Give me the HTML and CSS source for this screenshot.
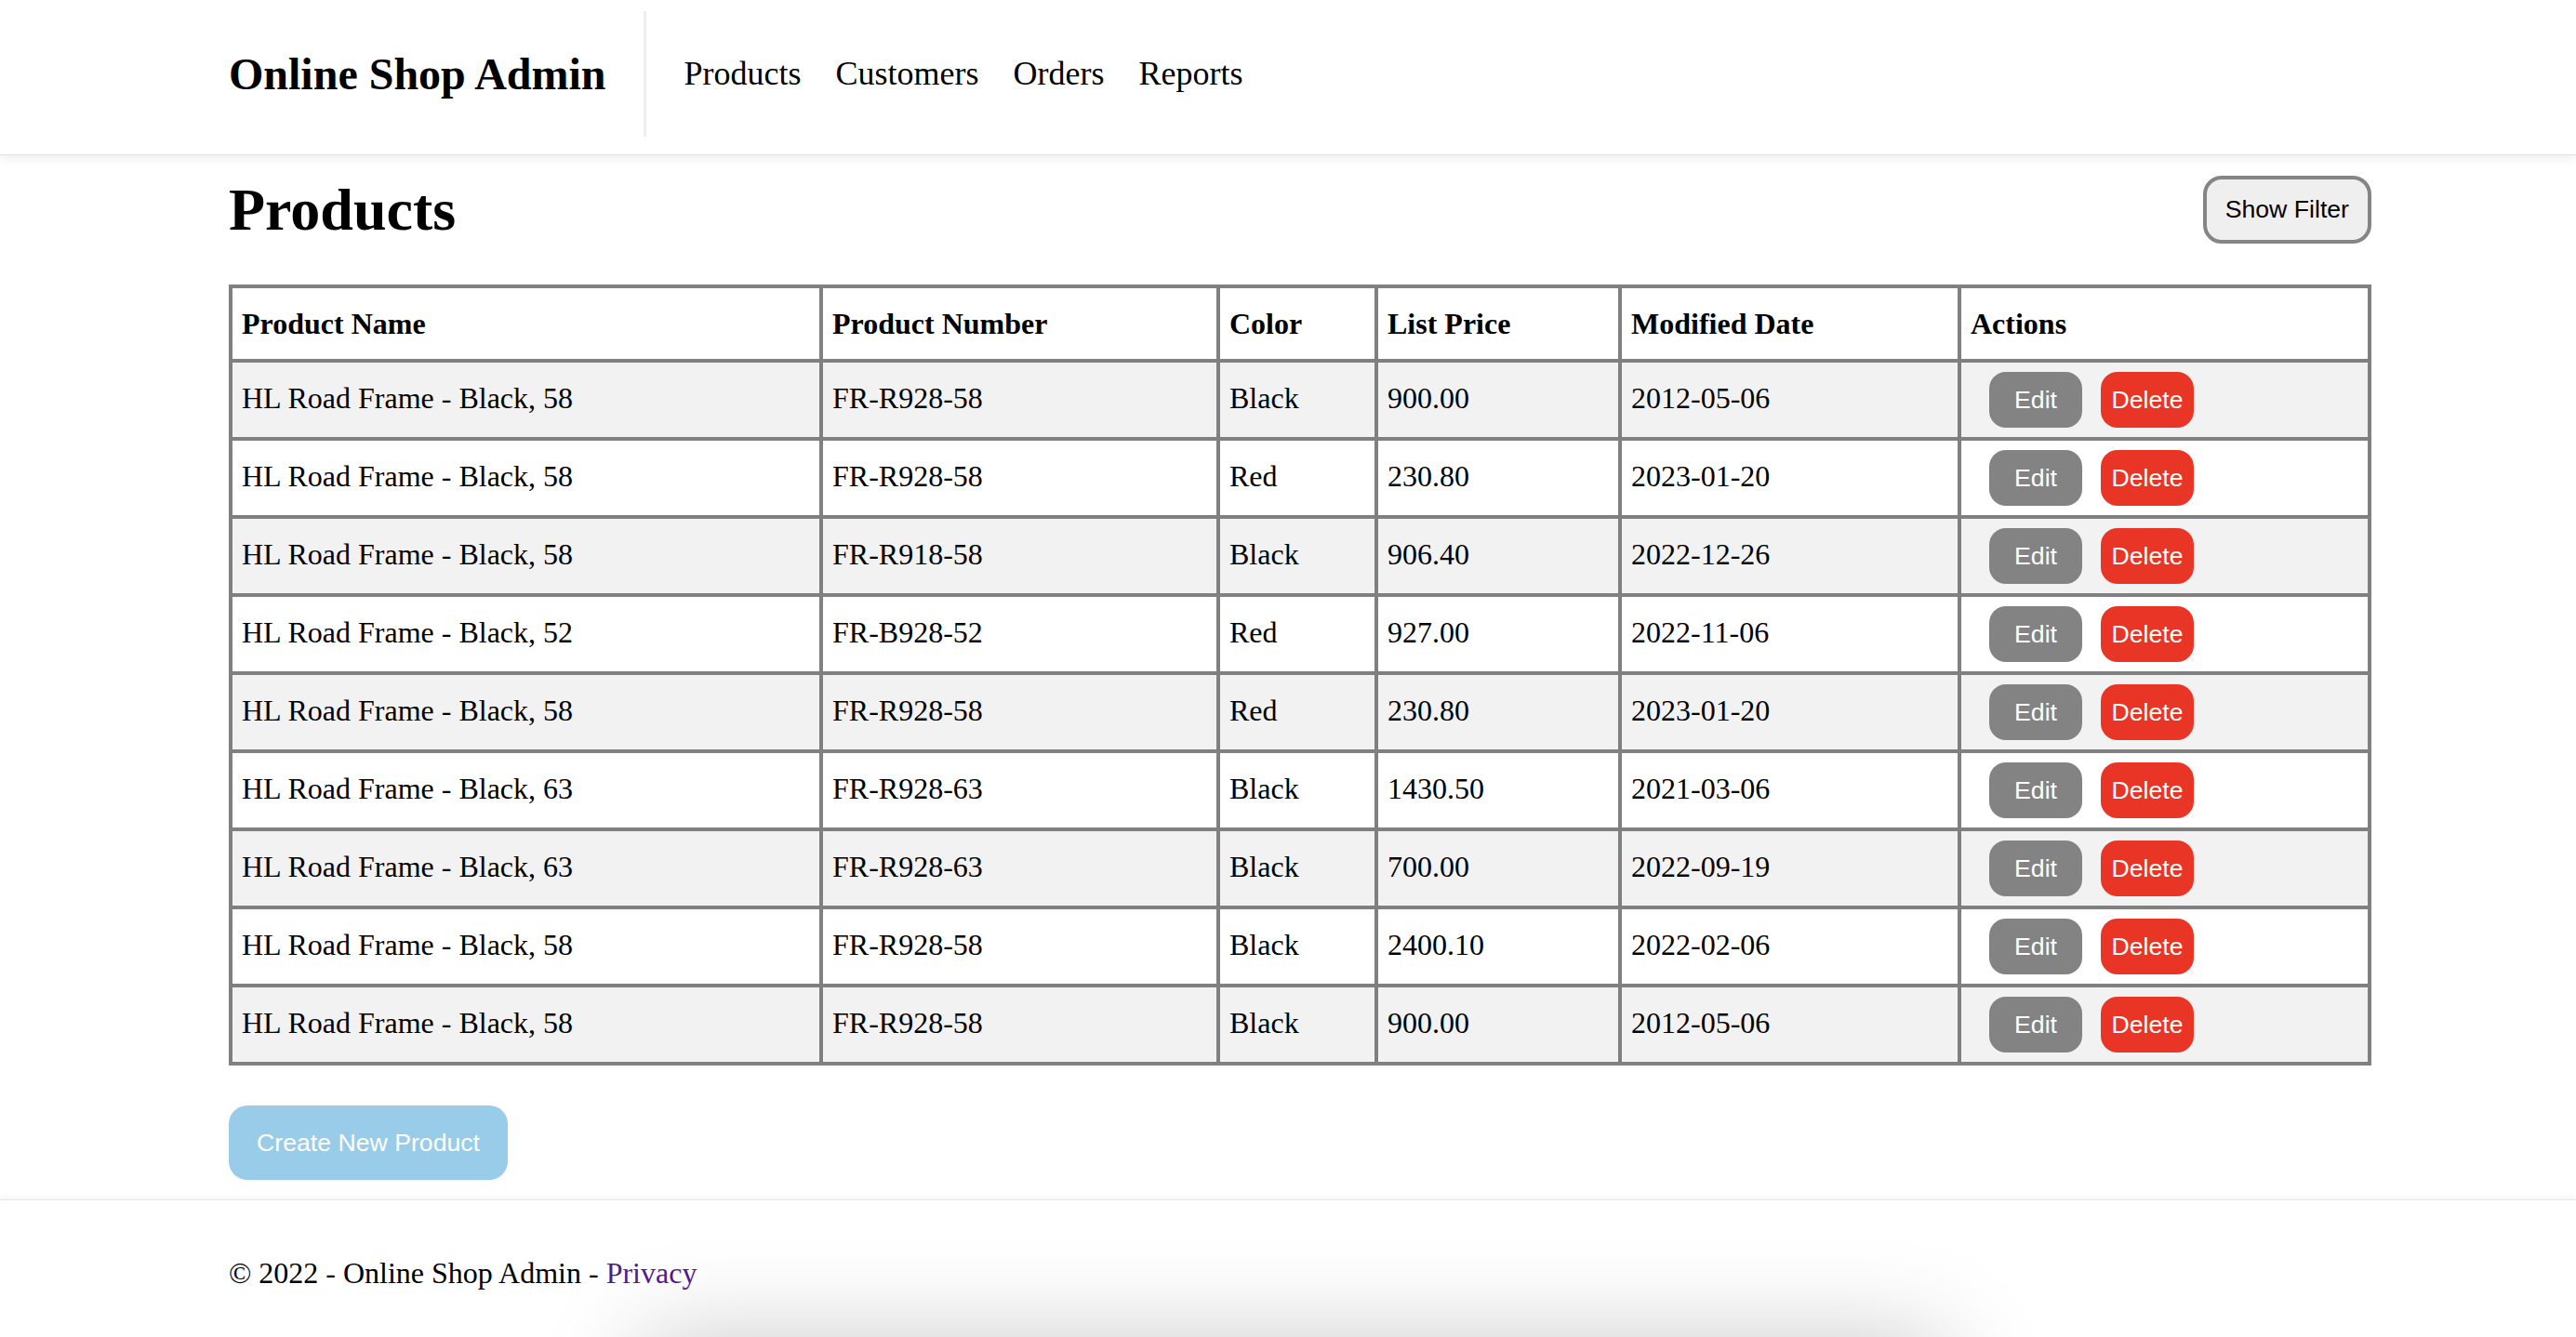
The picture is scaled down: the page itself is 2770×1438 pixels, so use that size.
FILE: index.html
```html
<!DOCTYPE html>
<html lang="en">
<head>
<meta charset="utf-8">
<title>Products - Online Shop Admin</title>
<link rel="stylesheet" href="styles.css">
</head>
<body>
<header class="site-header">
  <div class="container header-inner">
    <a class="brand" href="#">Online Shop Admin</a>
    <span class="divider"></span>
    <nav class="main-nav">
      <a href="#">Products</a>
      <a href="#">Customers</a>
      <a href="#">Orders</a>
      <a href="#">Reports</a>
    </nav>
  </div>
</header>

<main class="container">
  <div class="title-row">
    <h1>Products</h1>
    <button class="btn-filter" type="button">Show Filter</button>
  </div>

  <table class="grid">
    <thead>
      <tr>
        <th class="c-name">Product Name</th>
        <th class="c-number">Product Number</th>
        <th class="c-color">Color</th>
        <th class="c-price">List Price</th>
        <th class="c-date">Modified Date</th>
        <th class="c-actions">Actions</th>
      </tr>
    </thead>
    <tbody>
      <tr><td>HL Road Frame - Black, 58</td><td>FR-R928-58</td><td>Black</td><td>900.00</td><td>2012-05-06</td><td><div class="actions"><button class="btn-edit">Edit</button><button class="btn-delete">Delete</button></div></td></tr>
      <tr><td>HL Road Frame - Black, 58</td><td>FR-R928-58</td><td>Red</td><td>230.80</td><td>2023-01-20</td><td><div class="actions"><button class="btn-edit">Edit</button><button class="btn-delete">Delete</button></div></td></tr>
      <tr><td>HL Road Frame - Black, 58</td><td>FR-R918-58</td><td>Black</td><td>906.40</td><td>2022-12-26</td><td><div class="actions"><button class="btn-edit">Edit</button><button class="btn-delete">Delete</button></div></td></tr>
      <tr><td>HL Road Frame - Black, 52</td><td>FR-B928-52</td><td>Red</td><td>927.00</td><td>2022-11-06</td><td><div class="actions"><button class="btn-edit">Edit</button><button class="btn-delete">Delete</button></div></td></tr>
      <tr><td>HL Road Frame - Black, 58</td><td>FR-R928-58</td><td>Red</td><td>230.80</td><td>2023-01-20</td><td><div class="actions"><button class="btn-edit">Edit</button><button class="btn-delete">Delete</button></div></td></tr>
      <tr><td>HL Road Frame - Black, 63</td><td>FR-R928-63</td><td>Black</td><td>1430.50</td><td>2021-03-06</td><td><div class="actions"><button class="btn-edit">Edit</button><button class="btn-delete">Delete</button></div></td></tr>
      <tr><td>HL Road Frame - Black, 63</td><td>FR-R928-63</td><td>Black</td><td>700.00</td><td>2022-09-19</td><td><div class="actions"><button class="btn-edit">Edit</button><button class="btn-delete">Delete</button></div></td></tr>
      <tr><td>HL Road Frame - Black, 58</td><td>FR-R928-58</td><td>Black</td><td>2400.10</td><td>2022-02-06</td><td><div class="actions"><button class="btn-edit">Edit</button><button class="btn-delete">Delete</button></div></td></tr>
      <tr><td>HL Road Frame - Black, 58</td><td>FR-R928-58</td><td>Black</td><td>900.00</td><td>2012-05-06</td><td><div class="actions"><button class="btn-edit">Edit</button><button class="btn-delete">Delete</button></div></td></tr>
    </tbody>
  </table>

  <button class="btn-create" type="button">Create New Product</button>
</main>

<footer class="site-footer">
  <div class="container">
    &copy; 2022 - Online Shop Admin - <a href="#">Privacy</a>
  </div>
</footer>

<div class="bottom-sheet"></div>
</body>
</html>
```

FILE: styles.css
```css
html, body {
  margin: 0;
  padding: 0;
  background: #ffffff;
}

body {
  font-family: "Liberation Serif", "Times New Roman", serif;
  font-size: 32px;
  color: #000000;
  overflow: hidden;
}

.container {
  width: 2304px;
  margin-left: 246px;
}

/* Header */
.site-header {
  height: 167px;
  box-sizing: border-box;
  border-bottom: 1px solid #e3e3e3;
  box-shadow: 0 3px 10px rgba(0, 0, 0, 0.08);
  position: relative;
  z-index: 1;
}

.header-inner {
  display: flex;
  align-items: flex-start;
}

.brand {
  font-size: 48px;
  font-weight: bold;
  line-height: 56px;
  margin-top: 52px;
  margin-right: 40px;
  color: #000000;
  text-decoration: none;
}

.divider {
  width: 3px;
  height: 135px;
  margin-top: 12px;
  background: #eeeeee;
}

.main-nav {
  display: flex;
  gap: 37px;
  margin-left: 41px;
  margin-top: 59px;
}

.main-nav a {
  font-size: 36px;
  line-height: 40px;
  color: #000000;
  text-decoration: none;
}

/* Title row */
.title-row {
  display: flex;
  justify-content: space-between;
  align-items: center;
  margin-top: 22px;
}

.title-row h1 {
  margin: 0;
  font-size: 64px;
  line-height: 73px;
  font-weight: bold;
}

.btn-filter {
  box-sizing: border-box;
  height: 73px;
  padding: 0 20px;
  border: 4px solid #858585;
  border-radius: 20px;
  background: #efefef;
  color: #000000;
  font-family: "Liberation Sans", Arial, sans-serif;
  font-size: 26.67px;
  white-space: nowrap;
}

/* Table */
.grid {
  margin-top: 44px;
  width: 2304px;
  table-layout: fixed;
  border-collapse: separate;
  border-spacing: 0;
  border-top: 4px solid #808080;
  border-left: 4px solid #808080;
}

.grid th,
.grid td {
  border-right: 4px solid #808080;
  border-bottom: 4px solid #808080;
  text-align: left;
  vertical-align: baseline;
  line-height: 38px;
}

.grid th {
  padding: 19px 10px;
  font-weight: bold;
}

.grid td {
  padding: 10px;
}

.grid tbody tr:nth-child(odd) {
  background: #f2f2f2;
}

.c-name { width: 611px; }
.c-number { width: 403px; }
.c-color { width: 146px; }
.c-price { width: 238px; }
.c-date { width: 341px; }
.c-actions { width: 417px; }

.actions {
  display: flex;
  gap: 20px;
  padding-left: 20px;
}

.btn-edit,
.btn-delete {
  width: 100px;
  height: 60px;
  padding: 0;
  border: none;
  border-radius: 18px;
  color: #ffffff;
  font-family: "Liberation Sans", Arial, sans-serif;
  font-size: 26.67px;
}

.btn-edit {
  background: #838383;
}

.btn-delete {
  background: #e93526;
}

.btn-create {
  display: block;
  margin-top: 43px;
  height: 80px;
  padding: 0 30px;
  border: none;
  border-radius: 20px;
  background: #98cce8;
  color: #ffffff;
  font-family: "Liberation Sans", Arial, sans-serif;
  font-size: 26.67px;
}

/* Footer */
.site-footer {
  margin-top: 21px;
  border-top: 1px solid #e6e6e6;
  box-shadow: 0 -3px 6px rgba(0, 0, 0, 0.04);
  padding-top: 58px;
  padding-bottom: 40px;
  line-height: 40px;
}

.site-footer a {
  color: #551a8b;
  text-decoration: none;
}

.bottom-sheet {
  position: fixed;
  left: 690px;
  top: 1442px;
  width: 1400px;
  height: 200px;
  background: #ffffff;
  box-shadow: 0 0 110px rgba(0, 0, 0, 0.22);
}
```
